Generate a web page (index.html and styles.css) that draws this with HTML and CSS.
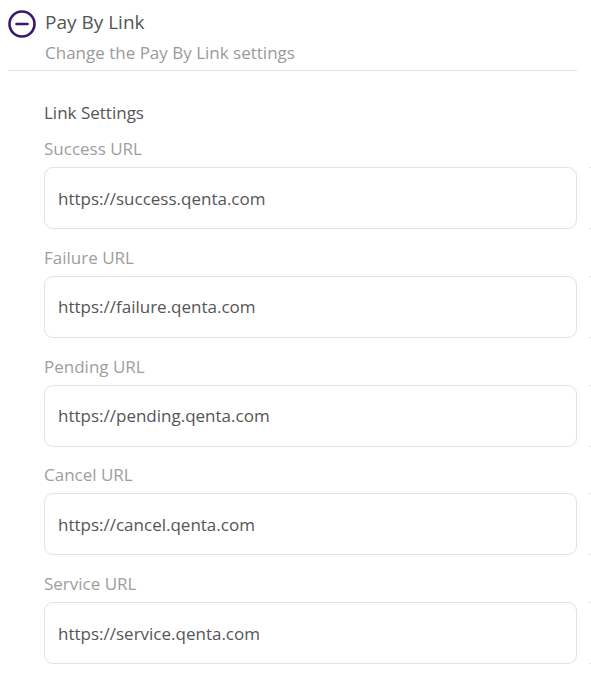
FILE: index.html
```html
<!DOCTYPE html>
<html>
<head>
<meta charset="utf-8">
<link rel="stylesheet" href="styles.css">
</head>
<body>
<div class="page">
  <div class="header">
    <svg class="toggle" width="28" height="28" viewBox="0 0 28 28">
      <circle cx="14" cy="14" r="12.5" fill="none" stroke="#3b1670" stroke-width="2.6"/>
      <line x1="8.5" y1="14" x2="19.5" y2="14" stroke="#3b1670" stroke-width="2.6" stroke-linecap="round"/>
    </svg>
    <div class="header-text">
      <div class="title">Pay By Link</div>
      <div class="subtitle">Change the Pay By Link settings</div>
    </div>
  </div>
  <div class="divider"></div>
  <div class="settings">
    <div class="section-title">Link Settings</div>
    <div class="field">
      <div class="label">Success URL</div>
      <div class="row"><div class="input">https://success.qenta.com</div><div class="ghost"></div></div>
    </div>
    <div class="field">
      <div class="label">Failure URL</div>
      <div class="row"><div class="input">https://failure.qenta.com</div><div class="ghost"></div></div>
    </div>
    <div class="field">
      <div class="label">Pending URL</div>
      <div class="row"><div class="input">https://pending.qenta.com</div><div class="ghost"></div></div>
    </div>
    <div class="field">
      <div class="label">Cancel URL</div>
      <div class="row"><div class="input">https://cancel.qenta.com</div><div class="ghost"></div></div>
    </div>
    <div class="field">
      <div class="label">Service URL</div>
      <div class="row"><div class="input">https://service.qenta.com</div><div class="ghost"></div></div>
    </div>
  </div>
</div>
</body>
</html>
```
FILE: styles.css
```css
html, body {
  margin: 0;
  padding: 0;
  background: #ffffff;
  overflow: hidden;
}
body {
  font-family: "Open Sans", "Noto Sans", sans-serif;
  width: 591px;
  height: 676px;
}
.page {
  padding: 9px 0 0 8px;
}
.header {
  display: flex;
  align-items: flex-start;
  gap: 9px;
}
.toggle {
  margin-top: 1px;
  flex: none;
}
.title {
  font-size: 19px;
  line-height: 26px;
  color: #555555;
}
.subtitle {
  font-size: 17px;
  line-height: 24px;
  color: #9a9a9a;
  margin-top: 6px;
}
.divider {
  height: 1px;
  background: #e3e3e3;
  margin: 5px 14px 0 0;
}
.settings {
  padding-left: 36px;
  padding-top: 30px;
}
.section-title {
  font-size: 17px;
  line-height: 24px;
  color: #555555;
}
.field {
  margin-top: 12px;
}
.field + .field {
  margin-top: 16.75px;
}
.label {
  font-size: 17px;
  line-height: 24px;
  color: #9e9e9e;
}
.row {
  display: flex;
  gap: 12px;
  margin-top: 6px;
}
.input {
  flex: none;
  width: 533px;
  height: 62px;
  box-sizing: border-box;
  border: 1px solid #e2e2e2;
  border-radius: 9px;
  padding: 0 13px;
  display: flex;
  align-items: center;
  font-size: 17px;
  color: #555555;
}
.ghost {
  flex: none;
  width: 2px;
  height: 62px;
  box-sizing: border-box;
  border-top: 1px solid #e2e2e2;
  border-bottom: 1px solid #e2e2e2;
}
```
